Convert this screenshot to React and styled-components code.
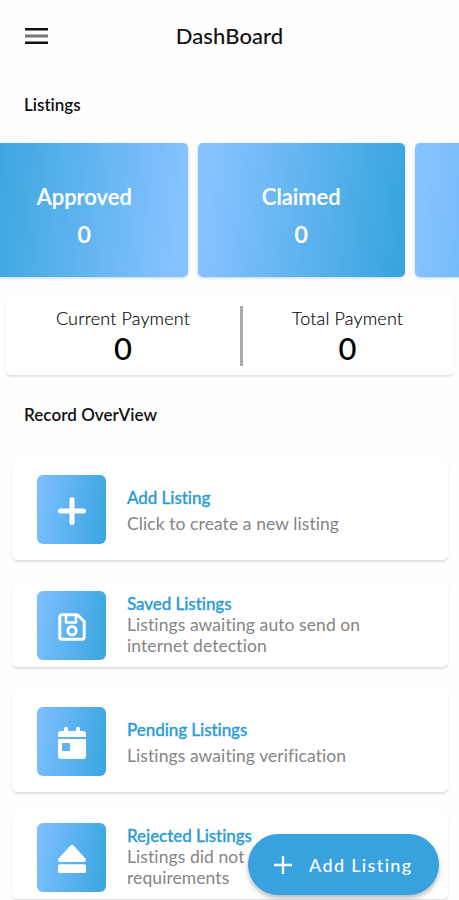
import React from "react";
import styled, { createGlobalStyle } from "styled-components";

const GlobalStyle = createGlobalStyle`
  * { box-sizing: border-box; }
  html, body { margin: 0; height: 100%; overflow: hidden; background: #fefefe; }
  body { font-family: Lato, "Open Sans", sans-serif; color: #111; font-variant-ligatures: none; }
`;

const Screen = styled.div`
  position: relative;
  width: 459px;
  height: 900px;
  overflow: hidden;
  display: flex;
  flex-direction: column;
  background: #fefefe;
`;

const TopBar = styled.header`
  display: grid;
  grid-template-columns: 60px 1fr 60px;
  align-items: center;
  height: 72px;
  flex: none;
`;

const MenuIcon = styled.svg`
  width: 23px;
  height: 16px;
  margin-left: 25px;
`;

const PageTitle = styled.h1`
  margin: 0;
  text-align: center;
  font-size: 22px;
  font-weight: 500;
  line-height: 30px;
  letter-spacing: 0.1px;
`;

const SectionTitle = styled.h2`
  margin: ${(p) => p.$top}px 0 0 24px;
  height: 24px;
  flex: none;
  font-size: 17px;
  font-weight: 600;
  line-height: 24px;
  letter-spacing: ${(p) => p.$spacing || "0"};
`;

const Carousel = styled.div`
  display: flex;
  gap: 10.5px;
  flex: none;
  height: 134px;
  margin: 26px 0 0 -19px;
`;

const StatCard = styled.div`
  flex: none;
  width: 206.5px;
  height: 134px;
  padding-top: 39px;
  border-radius: 5px;
  text-align: center;
  color: #fff;
  background: linear-gradient(${(p) => (p.$reverse ? "276deg" : "96deg")}, #86c2ff 6%, #38a5df 97%);
  box-shadow: 0 1px 3px rgba(60, 110, 150, 0.3);
`;

const StatLabel = styled.div`
  font-size: 22px;
  font-weight: 600;
  line-height: 30px;
  -webkit-text-stroke: 0.2px currentColor;
`;

const StatValue = styled.div`
  margin-top: 7px;
  font-size: 23px;
  font-weight: 600;
  line-height: 30px;
  -webkit-text-stroke: 0.2px currentColor;
`;

const Payments = styled.section`
  display: grid;
  grid-template-columns: 234px 3px 1fr;
  align-items: center;
  flex: none;
  height: 78px;
  margin: 20px 5px 0 6px;
  padding: 9px 0 9px;
  border-radius: 5px;
  background: #fff;
  box-shadow: 0 2px 2px rgba(0, 0, 0, 0.1), 0 1px 2px rgba(0, 0, 0, 0.02);
`;

const Payment = styled.div`
  text-align: center;
  padding-right: ${(p) => p.$inset || 0}px;
`;

const PaymentLabel = styled.div`
  font-size: 18px;
  font-weight: 300;
  line-height: 24px;
  letter-spacing: 0.15px;
  color: #000;
  -webkit-text-stroke: 0.15px currentColor;
`;

const PaymentValue = styled.div`
  font-size: 31px;
  font-weight: 500;
  line-height: 36px;
  color: #000;
`;

const Divider = styled.div`
  height: 60px;
  background: #ababab;
`;

const Records = styled.div`
  display: flex;
  flex-direction: column;
  flex: none;
  margin: 33px 11px 0 12px;
`;

const Record = styled.article`
  display: flex;
  align-items: flex-end;
  flex: none;
  height: ${(p) => p.$height}px;
  margin-bottom: ${(p) => p.$gap}px;
  padding: 0 0 ${(p) => p.$bottom}px 25px;
  border-radius: 5px;
  background: #fff;
  box-shadow: 0 2px 2px rgba(0, 0, 0, 0.11), 0 1px 2px rgba(0, 0, 0, 0.02);
`;

const Tile = styled.div`
  display: flex;
  align-items: center;
  justify-content: center;
  flex: none;
  width: 69px;
  height: 69px;
  padding-top: 3px;
  border-radius: 6px;
  color: #fff;
  background: linear-gradient(98deg, #7dbfff 3%, #3aa6e2 97%);
`;

const Glyph = styled.svg`
  width: 28px;
  height: ${(p) => p.$height || 28}px;
  display: block;
`;

const RecordText = styled.div`
  display: flex;
  flex-direction: column;
  justify-content: center;
  height: 69px;
  margin-left: 21px;
  padding: ${(p) => (p.$roomy ? "2px 0 0" : "0 0 2px")};
  gap: ${(p) => (p.$roomy ? "5px" : "0")};
`;

const RecordTitle = styled.h3`
  margin: 0;
  font-size: 17px;
  font-weight: 500;
  line-height: 21px;
  letter-spacing: -0.05px;
  -webkit-text-stroke: 0.3px currentColor;
  color: #2b9cd6;
`;

const RecordNote = styled.p`
  margin: 0;
  font-size: 17.5px;
  line-height: 21.5px;
  letter-spacing: 0.08px;
  white-space: pre-line;
  color: #858585;
`;

const AddButton = styled.button`
  position: absolute;
  left: 248px;
  top: 834px;
  width: 191px;
  height: 61px;
  display: flex;
  align-items: center;
  gap: 17px;
  padding: 1px 0 0 26px;
  border: 0;
  border-radius: 31px;
  color: #fff;
  background: #38a2df;
  box-shadow: 0 3px 5px rgba(0, 0, 0, 0.28);
  font: 500 18px Lato, sans-serif;
  letter-spacing: 1.35px;
  white-space: nowrap;
`;

const ButtonPlus = styled.svg`
  width: 18px;
  height: 18px;
  flex: none;
`;

const PlusGlyph = () => (
  <Glyph viewBox="0 0 28 28">
    <path d="M14 2.5v23M2.5 14h23" stroke="currentColor" strokeWidth="5" strokeLinecap="round" />
  </Glyph>
);

const SaveGlyph = () => (
  <Glyph viewBox="0 0 28 28" fill="none" stroke="currentColor" strokeWidth="3" strokeLinejoin="round">
    <path d="M4 1.8h15.5l6.7 6.7V24a2.2 2.2 0 0 1-2.2 2.2H4A2.2 2.2 0 0 1 1.8 24V4A2.2 2.2 0 0 1 4 1.8Z" />
    <path d="M8 2v7.5h10V2" strokeWidth="2.6" />
    <circle cx="14" cy="17.7" r="4.2" strokeWidth="2.9" />
  </Glyph>
);

const CalendarGlyph = () => (
  <Glyph viewBox="0 0 28 32" $height={32}>
    <path
      fill="currentColor"
      d="M6 1.5A1.5 1.5 0 0 1 7.5 0h1A1.5 1.5 0 0 1 10 1.5V4h8V1.5A1.5 1.5 0 0 1 19.5 0h1A1.5 1.5 0 0 1 22 1.5V4h3a3 3 0 0 1 3 3v3H0V7a3 3 0 0 1 3-3h3Z"
    />
    <path
      fill="currentColor"
      fillRule="evenodd"
      d="M0 12h28v17a3 3 0 0 1-3 3H3a3 3 0 0 1-3-3Zm5 4a1 1 0 0 0-1 1V23a1 1 0 0 0 1 1h6a1 1 0 0 0 1-1v-6a1 1 0 0 0-1-1Z"
    />
  </Glyph>
);

const EjectGlyph = () => (
  <Glyph viewBox="0 0 28 28" fill="currentColor">
    <path d="M12.3.8a2.3 2.3 0 0 1 3.4 0l11.5 12.4c1.5 1.6.6 3.7-1.6 3.7H2.4C.2 16.9-.7 14.8.8 13.2Z" />
    <rect x="0" y="19.3" width="28" height="8.7" rx="1.6" />
  </Glyph>
);

const records = [
  { title: "Add Listing", note: "Click to create a new listing", icon: PlusGlyph, height: 100, bottom: 16, gap: 22, roomy: true },
  { title: "Saved Listings", note: "Listings awaiting auto send on\ninternet detection", icon: SaveGlyph, height: 85, bottom: 7, gap: 22 },
  { title: "Pending Listings", note: "Listings awaiting verification", icon: CalendarGlyph, height: 103, bottom: 16, gap: 20, roomy: true },
  { title: "Rejected Listings", note: "Listings did not meet\nrequirements", icon: EjectGlyph, height: 87, bottom: 7, gap: 0 },
];

export default function App() {
  return (
    <>
      <GlobalStyle />
      <Screen>
        <TopBar>
          <MenuIcon viewBox="0 0 23 16">
            <path d="M0 1.2h23M0 14.8h23" stroke="#111" strokeWidth="2.4" />
            <path d="M0 8h23" stroke="#777" strokeWidth="3" />
          </MenuIcon>
          <PageTitle>DashBoard</PageTitle>
        </TopBar>
        <SectionTitle $top={21}>Listings</SectionTitle>
        <Carousel>
          <StatCard $reverse>
            <StatLabel>Approved</StatLabel>
            <StatValue>0</StatValue>
          </StatCard>
          <StatCard>
            <StatLabel>Claimed</StatLabel>
            <StatValue>0</StatValue>
          </StatCard>
          <StatCard />
        </Carousel>
        <Payments>
          <Payment>
            <PaymentLabel>Current Payment</PaymentLabel>
            <PaymentValue>0</PaymentValue>
          </Payment>
          <Divider />
          <Payment $inset={2}>
            <PaymentLabel>Total Payment</PaymentLabel>
            <PaymentValue>0</PaymentValue>
          </Payment>
        </Payments>
        <SectionTitle $top={28} $spacing="0.05px">Record OverView</SectionTitle>
        <Records>
          {records.map(({ title, note, icon: Icon, height, bottom, gap, roomy }) => (
            <Record key={title} $height={height} $bottom={bottom} $gap={gap}>
              <Tile>
                <Icon />
              </Tile>
              <RecordText $roomy={roomy}>
                <RecordTitle>{title}</RecordTitle>
                <RecordNote>{note}</RecordNote>
              </RecordText>
            </Record>
          ))}
        </Records>
        <AddButton>
          <ButtonPlus viewBox="0 0 18 18">
            <path d="M9 0v18M0 9h18" stroke="currentColor" strokeWidth="2.3" />
          </ButtonPlus>
          Add Listing
        </AddButton>
      </Screen>
    </>
  );
}
